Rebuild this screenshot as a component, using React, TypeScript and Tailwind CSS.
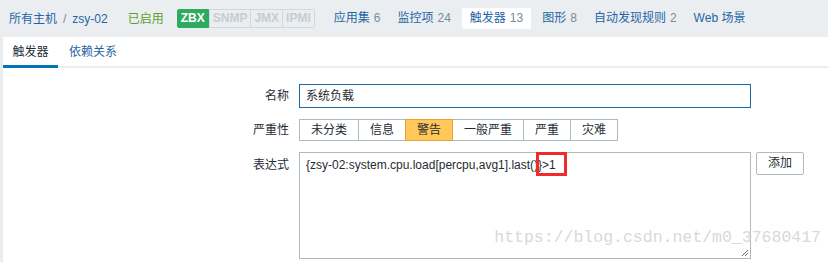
import React from 'react'

const font = { fontFamily: 'Arial, "Liberation Sans", "Noto Sans CJK SC", sans-serif' }

const navItems = [
  { label: '应用集', count: '6' },
  { label: '监控项', count: '24' },
  { label: '触发器', count: '13', active: true },
  { label: '图形', count: '8' },
  { label: '自动发现规则', count: '2' },
  { label: 'Web 场景', count: '' },
]

const severities = ['未分类', '信息', '警告', '一般严重', '严重', '灾难']

export default function App() {
  return (
    <div className="w-[828px] h-[262px] bg-[#ebeef0] overflow-hidden text-[12px]" style={font}>
      {/* host breadcrumb bar */}
      <div className="h-[37px] flex items-center pl-[9px]">
        <span className="text-[#1f65a6]">所有主机</span>
        <span className="text-[#768d99] mx-[6px]">/</span>
        <span className="text-[#1f65a6]">zsy-02</span>
        <span className="text-[#59a22e] ml-[20px]">已启用</span>
        <div className="flex ml-[13px] text-[12px] leading-[17px] font-bold">
          <span className="bg-[#2eab5f] text-white border border-[#2eab5f] rounded-l-[2px] px-[3px]">ZBX</span>
          <span className="text-[#c5cdd2] border border-[#d2d8dc] px-[3px]">SNMP</span>
          <span className="text-[#c5cdd2] border border-[#d2d8dc] border-l-0 px-[3px]">JMX</span>
          <span className="text-[#c5cdd2] border border-[#d2d8dc] border-l-0 rounded-r-[2px] px-[3px]">IPMI</span>
        </div>
        <div className="flex ml-[13px] gap-[5px]">
          {navItems.map((n) => (
            <span
              key={n.label}
              className={
                'h-[21px] leading-[21px] rounded-[2px] ' +
                (n.active ? 'bg-white px-[8px]' : 'px-[6px]')
              }
            >
              <span className="text-[#1f65a6]">{n.label}</span>
              {n.count && <span className="text-[#768d99] ml-[4px]">{n.count}</span>}
            </span>
          ))}
        </div>
      </div>

      {/* main panel */}
      <div className="ml-[3px] bg-white h-[225px]">
        <div className="flex h-[31px] border-b-2 border-[#ebeef0]">
          <div className="w-[55px] text-center leading-[30px] text-[#1f2c33] border-b-[3px] border-[#0275b8] mb-[-2px]">
            触发器
          </div>
          <div className="px-[11px] leading-[30px] text-[#1f65a6]">依赖关系</div>
        </div>

        <div className="relative pt-[16px]">
          {/* name */}
          <div className="flex items-center h-[24px]">
            <div className="w-[296px] text-right pr-[10px] text-[#1f2c33]">名称</div>
            <div className="w-[452px] h-[24px] border border-[#1f65a6] px-[6px] leading-[22px] text-[#1f2c33]">
              系统负载
            </div>
          </div>

          {/* severity */}
          <div className="flex items-center h-[22px] mt-[11px]">
            <div className="w-[296px] text-right pr-[10px] text-[#1f2c33]">严重性</div>
            <div className="flex h-[22px]">
              {severities.map((s, i) => (
                <span
                  key={s}
                  className={
                    'px-[11px] leading-[20px] border text-[#1f2c33] ' +
                    (i > 0 ? '-ml-px ' : '') +
                    (s === '警告'
                      ? 'bg-[#ffc859] border-[#e0a43a] relative z-10'
                      : 'border-[#acbbc2]')
                  }
                >
                  {s}
                </span>
              ))}
            </div>
          </div>

          {/* expression */}
          <div className="flex mt-[11px]">
            <div className="w-[296px] text-right pr-[10px] text-[#1f2c33] pt-[4px]">表达式</div>
            <div className="relative w-[452px] h-[107px] border border-[#acbbc2] px-[6px] pt-[3px] text-[#1f2c33]">
              {'{zsy-02:system.cpu.load[percpu,avg1].last()}>1'}
              <span className="absolute left-[236px] top-[-1px] w-[31px] h-[24px] border-[3px] border-[#ee2c2c]" />
              <svg className="absolute right-[1px] bottom-[1px]" width="9" height="9" viewBox="0 0 9 9">
                <path d="M8 2 L2 8 M8 5 L5 8" stroke="#666" strokeWidth="1" />
              </svg>
            </div>
            <div className="ml-[5px] h-[23px] px-[11px] leading-[21px] border border-[#acbbc2] rounded-[2px] text-[#1f2c33]">
              添加
            </div>
          </div>

          <div
            className="absolute right-[7px] top-[158px] text-[16.5px] text-[#d9d9d9]"
            style={{ fontFamily: '"Liberation Mono", monospace' }}
          >
            https://blog.csdn.net/m0_37680417
          </div>
        </div>
      </div>
    </div>
  )
}
